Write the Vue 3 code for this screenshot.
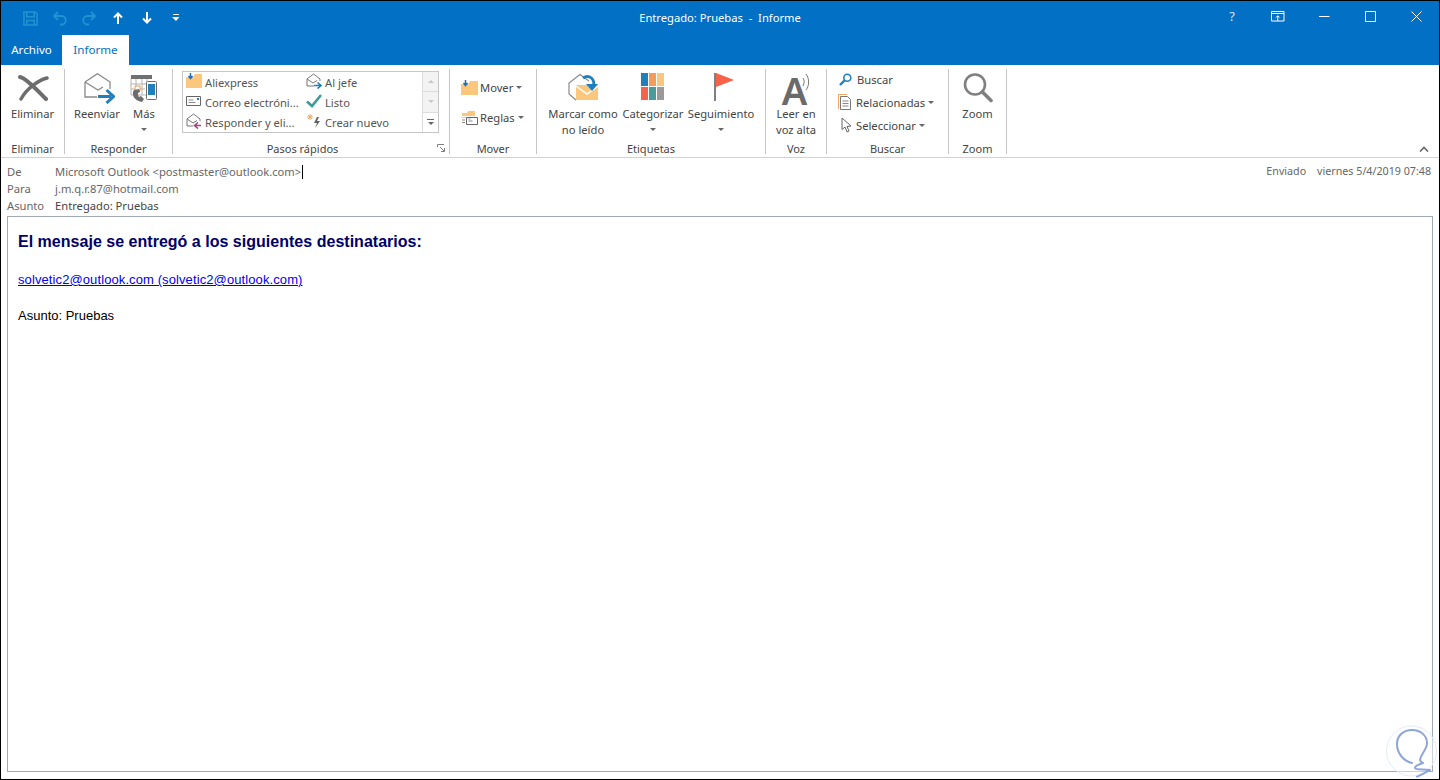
<script setup>
const quickSteps = [
  { id: "ali", label: "Aliexpress" },
  { id: "jefe", label: "Al jefe" },
  { id: "correo", label: "Correo electróni..." },
  { id: "listo", label: "Listo" },
  { id: "resp", label: "Responder y eli..." },
  { id: "nuevo", label: "Crear nuevo" },
];
</script>

<template>
  <div class="window">
    <header class="titlebar">
      <div class="qat">
        <button class="qat-btn">
          <svg width="15" height="15" viewBox="0 0 16 16" fill="none" stroke="#2292d2" stroke-width="1.600">
            <path d="M1 1h12l2 2v12H1z" />
            <path d="M4 1v5h8V1M4 15v-5h8v5" />
          </svg>
        </button>
        <button class="qat-btn">
          <svg width="16" height="16" viewBox="0 0 16 16" fill="none" stroke="#2292d2" stroke-width="1.800">
            <path d="M6 2 2 6l4 4" />
            <path d="M2 6h7.500a4.200 4.200 0 0 1 0 8.500H8" />
          </svg>
        </button>
        <button class="qat-btn">
          <svg width="16" height="16" viewBox="0 0 16 16" fill="none" stroke="#2292d2" stroke-width="1.800">
            <path d="m10 2 4 4-4 4" />
            <path d="M14 6H6.500a4.200 4.200 0 0 0 0 8.500H8" />
          </svg>
        </button>
        <button class="qat-btn">
          <svg width="10" height="12" viewBox="0 0 10 12" fill="none" stroke="#fff" stroke-width="2">
            <path d="M1 5.500 5 1.500l4 4M5 2v10" />
          </svg>
        </button>
        <button class="qat-btn">
          <svg width="10" height="12" viewBox="0 0 10 12" fill="none" stroke="#fff" stroke-width="2">
            <path d="M1 6.500 5 10.500l4-4M5 10V0" />
          </svg>
        </button>
        <button class="qat-btn">
          <svg width="8" height="8" viewBox="0 0 8 8" fill="#fff">
            <path d="M1 0h6v1H1zM0 3h7.500L4 7z" />
          </svg>
        </button>
      </div>
      <div class="title">Entregado: Pruebas&nbsp; -&nbsp; Informe</div>
      <div class="controls">
        <button class="ctrl help">?</button>
        <button class="ctrl">
          <svg width="14" height="11" viewBox="0 0 14 11" fill="none" stroke="#fff">
            <path d="M.5.500h12.500v9.500H.5zM.5 2.500H13M6.800 10V5M5 6.500l1.800-1.800 1.800 1.800" />
          </svg>
        </button>
        <button class="ctrl">
          <svg width="11" height="11" viewBox="0 0 11 11" stroke="#fff"><path d="M0 5.500h10.500" /></svg>
        </button>
        <button class="ctrl">
          <svg width="11" height="11" viewBox="0 0 11 11" fill="none" stroke="#fff"><path d="M.5.500h10v10H.5z" /></svg>
        </button>
        <button class="ctrl">
          <svg width="11" height="11" viewBox="0 0 11 11" fill="none" stroke="#fff"><path d="m.5.500 10 10M10.500.500l-10 10" /></svg>
        </button>
      </div>
    </header>

    <nav class="tabs">
      <span class="tab">Archivo</span>
      <span class="tab active">Informe</span>
    </nav>

    <section class="ribbon">
      <div class="group g-eliminar">
        <div class="group-body center">
          <div class="big" style="width: 63px">
            <div class="big-icon">
              <svg width="32" height="28" viewBox="0 0 32 28" fill="none" stroke="#6d6d6d" stroke-linecap="round">
                <path d="M3 4c6 1 17 13 26 22" stroke-width="4" />
                <path d="M30 5C22 7 10 15 4 26" stroke-width="3.400" />
              </svg>
            </div>
            <span>Eliminar</span>
          </div>
        </div>
        <div class="group-label">Eliminar</div>
      </div>

      <div class="group g-responder">
        <div class="group-body center responder-body">
          <div class="big w-reenviar">
            <div class="big-icon">
              <svg class="i-reenviar" width="31" height="31" viewBox="0 0 31 31" fill="none">
                <path d="M1 9 13.500.7 26 9v7M1 9v15h12M1 9l13 8 5-3" stroke="#8a8a8a" stroke-width="1.300" />
                <path d="M14 23.500h13M22.500 17l7 6.500-7 6.500" stroke="#1f80bd" stroke-width="3" />
              </svg>
            </div>
            <span>Reenviar</span>
          </div>
          <div class="big w-mas">
            <div class="big-icon">
              <svg width="28" height="30" viewBox="0 0 28 30" fill="none">
                <path d="M1 2h21v4H1z" fill="#707070" />
                <path d="M1 6v16h16M1 11h21M1 16h14M6 6v16M12 6v16M17 6v5" stroke="#b5b5b5" />
                <path d="M5 13h5v5H5z" fill="#fff" stroke="#ee9a50" />
                <path d="M4 17c-3 4 0 11 8 12l2-3-3-3-2 1c-1-1-1-3-1-4l2-1-1-3z" fill="#6d6d6d" />
                <rect x="16.500" y="8.500" width="10" height="18" rx="1" fill="#fff" stroke="#6d6d6d" />
                <rect x="18" y="11" width="7" height="11" fill="#1f80bd" />
              </svg>
            </div>
            <span>Más</span>
            <i class="caret caret-line" />
          </div>
        </div>
        <div class="group-label">Responder</div>
      </div>

      <div class="group g-pasos">
        <div class="group-body">
          <div class="steps">
            <div class="steps-list">
              <div v-for="step in quickSteps" :key="step.id" class="step">
                <span class="step-icon">
                  <svg v-if="step.id === 'ali'" width="16" height="16" viewBox="0 0 16 16">
                    <path d="M0 4h7l2-3h7v14H0z" fill="#fbc77d" />
                    <path d="M4.500 0v4.500M2.500 3l2 2.500 2-2.500" fill="none" stroke="#1f6fb5" stroke-width="1.500" />
                  </svg>
                  <svg v-else-if="step.id === 'jefe'" width="16" height="16" viewBox="0 0 16 16" fill="none">
                    <path d="M1 6 7.500 1 14 6v2M1 6v7h7M1 6l6 4 4-2.500" stroke="#777" />
                    <path d="M8 12.500h6M11.500 9.500l3.500 3-3.500 3" stroke="#1f80bd" stroke-width="1.600" />
                  </svg>
                  <svg v-else-if="step.id === 'correo'" width="15" height="12" viewBox="0 0 15 12" fill="none">
                    <path d="M.5 1.500h14v9H.5z" stroke="#666" />
                    <path d="M2.500 5h5M2.500 7.500h7" stroke="#8a8a8a" />
                    <path d="M11 3h2v2h-2z" fill="#1f80bd" />
                  </svg>
                  <svg v-else-if="step.id === 'listo'" width="16" height="14" viewBox="0 0 16 14" fill="none">
                    <path d="M1 7.500 6 12 15 1" stroke="#3f9a9a" stroke-width="2.600" />
                  </svg>
                  <svg v-else-if="step.id === 'resp'" width="16" height="16" viewBox="0 0 16 16" fill="none">
                    <path d="M1 6 7.500 1 14 6v2M1 6v7h6M1 6l6 4 4-2.500" stroke="#777" />
                    <path d="M15 12.500H9M12 9.500l-3.500 3 3.500 3" stroke="#a6447f" stroke-width="1.600" />
                  </svg>
                  <svg v-else width="16" height="16" viewBox="0 0 16 16" fill="none">
                    <path d="M4 1v6M1 4h6M2 2l4 4M6 2 2 6" stroke="#f0a860" />
                    <path d="M11 4 8 10h3l-2 5 5-7h-3l2-4z" fill="#606060" />
                  </svg>
                </span>
                <span>{{ step.label }}</span>
              </div>
            </div>
            <div class="steps-scroll">
              <span class="sb"><i class="tri up" /></span>
              <span class="sb"><i class="tri" /></span>
              <span class="sb more"><i class="bar" /><i class="tri dark" /></span>
            </div>
          </div>
        </div>
        <div class="group-label label-pasos">Pasos rápidos</div>
        <svg class="launcher" width="8" height="8" viewBox="0 0 8 8" fill="none" stroke="#808080">
          <path d="M.5 3V.5H7M3 3l4 4M7.500 4v3.500H4" />
        </svg>
      </div>

      <div class="group g-mover">
        <div class="group-body column">
          <div class="small">
            <svg class="i-mover" width="17" height="15" viewBox="0 0 17 15">
              <path d="M0 4h7l2-3h8v14H0z" fill="#fbc77d" />
              <path d="M4.500 0v4.500M2.500 3l2 2.500 2-2.500" fill="none" stroke="#1f6fb5" stroke-width="1.500" />
            </svg>
            <span>Mover</span><i class="caret" />
          </div>
          <div class="small">
            <svg class="i-mover" width="17" height="15" viewBox="0 0 17 15" fill="none">
              <path d="M1 3h5l1-2h7v5H1z" fill="#fbc77d" />
              <path d="M0 7h6v1H0z" fill="#fbc77d" />
              <path d="M5.500 7.500h11v7h-11z" fill="#fff" stroke="#666" />
              <path d="M7.500 11h4M7.500 9h2M1 10h3M1 12.500h3" stroke="#888" />
            </svg>
            <span>Reglas</span><i class="caret" />
          </div>
        </div>
        <div class="group-label">Mover</div>
      </div>

      <div class="group g-etiquetas">
        <div class="group-body center">
          <div class="big w-marcar">
            <div class="big-icon">
              <svg width="30" height="30" viewBox="0 0 30 30" fill="none">
                <path d="M8 27 1 21V10L12 1.500 21 8" stroke="#8a8a8a" stroke-width="1.200" />
                <path d="M8 12h22v15H8z" fill="#fbc77d" />
                <path d="m8 13 11 8 11-8" stroke="#fff" stroke-width="1.500" />
                <path d="M15 5c6-4 13 1 10 9" stroke="#1f80bd" stroke-width="2.800" />
                <path d="M18 11h12l-6 7z" fill="#1f80bd" />
              </svg>
            </div>
            <span>Marcar como</span>
            <span>no leído</span>
          </div>
          <div class="big w-categorizar">
            <div class="big-icon">
              <svg width="24" height="28" viewBox="0 0 24 28">
                <rect x="0" y="0" width="7" height="13" fill="#1f80bd" />
                <rect x="8" y="0" width="7" height="13" fill="#f59c5b" />
                <rect x="16" y="0" width="7" height="13" fill="#fbc77d" />
                <rect x="0" y="14" width="7" height="13" fill="#f7634a" />
                <rect x="8" y="14" width="7" height="13" fill="#4a9c9c" />
                <rect x="16" y="14" width="7" height="13" fill="#9a9a9a" />
              </svg>
            </div>
            <span>Categorizar</span>
            <i class="caret caret-line" />
          </div>
          <div class="big w-seguimiento">
            <div class="big-icon">
              <svg class="i-flag" width="22" height="28" viewBox="0 0 22 28">
                <rect x="0" y="0" width="2" height="28" fill="#808080" />
                <path d="M2 0 20 7 2 14z" fill="#f7634a" />
              </svg>
            </div>
            <span>Seguimiento</span>
            <i class="caret caret-line" />
          </div>
        </div>
        <div class="group-label">Etiquetas</div>
      </div>

      <div class="group g-voz">
        <div class="group-body center">
          <div class="big w-leer">
            <div class="big-icon">
              <span class="read-a">A</span>
              <svg class="waves" width="8" height="18" viewBox="0 0 8 18" fill="none" stroke="#777">
                <path d="M1 5c1.500 2 1.500 5 0 8M4 1c3.500 4.500 3.500 11.500 0 16" />
              </svg>
            </div>
            <span>Leer en</span>
            <span>voz alta</span>
          </div>
        </div>
        <div class="group-label">Voz</div>
      </div>

      <div class="group g-buscar">
        <div class="group-body column tight">
          <div class="small">
            <svg class="i-buscar" width="13" height="13" viewBox="0 0 13 13" fill="none" stroke="#1f80bd">
              <circle cx="8.300" cy="4.700" r="3.500" stroke-width="1.600" />
              <path d="M5.500 7.500 1 12" stroke-width="2.400" />
            </svg>
            <span>Buscar</span>
          </div>
          <div class="small">
            <svg class="i-rel" width="13" height="16" viewBox="0 0 13 16" fill="none">
              <path d="M.5 15V.5H9" stroke="#f0a860" />
              <path d="M2.500 2.500h7l3 3v10h-10z" fill="#fff" stroke="#777" />
              <path d="M4.500 7h6M4.500 9.500h6M4.500 12h6" stroke="#888" />
            </svg>
            <span>Relacionadas</span><i class="caret" />
          </div>
          <div class="small">
            <svg class="i-sel" width="11" height="16" viewBox="0 0 11 16" fill="#fff" stroke="#666">
              <path d="M1 1v11.500l3-2.500 2 5 2-1-2-4.500 4-.5z" />
            </svg>
            <span>Seleccionar</span><i class="caret" />
          </div>
        </div>
        <div class="group-label">Buscar</div>
      </div>

      <div class="group g-zoom">
        <div class="group-body center">
          <div class="big" style="width: 57px">
            <div class="big-icon">
              <svg width="30" height="30" viewBox="0 0 30 30" fill="none" stroke="#808080">
                <circle cx="12" cy="11.500" r="10" stroke-width="2.600" />
                <path d="m19.500 19 8.500 8.500" stroke-width="3.600" stroke-linecap="round" />
              </svg>
            </div>
            <span>Zoom</span>
          </div>
        </div>
        <div class="group-label">Zoom</div>
      </div>

      <svg class="collapse" width="10" height="6" viewBox="0 0 10 6" fill="none" stroke="#666" stroke-width="1.600">
        <path d="m1 5.500 4-4 4 4" />
      </svg>
    </section>

    <section class="meta">
      <div class="meta-row">
        <span class="meta-key">De</span>
        <span class="meta-val">Microsoft Outlook &lt;postmaster@outlook.com&gt;</span>
        <i class="cursor" />
        <span class="sent"><span class="sent-key">Enviado</span><span>viernes 5/4/2019 07:48</span></span>
      </div>
      <div class="meta-row">
        <span class="meta-key">Para</span>
        <span class="meta-val">j.m.q.r.87@hotmail.com</span>
      </div>
      <div class="meta-row">
        <span class="meta-key">Asunto</span>
        <span class="meta-val subject">Entregado: Pruebas</span>
      </div>
    </section>

    <main class="message">
      <h1>El mensaje se entregó a los siguientes destinatarios:</h1>
      <p><a href="#">solvetic2@outlook.com (solvetic2@outlook.com)</a></p>
      <p>Asunto: Pruebas</p>
    </main>

    <svg class="watermark" width="56" height="56" viewBox="0 0 56 56" fill="none">
      <circle cx="29.500" cy="28" r="25" fill="#fff" fill-opacity="0.45" stroke="#e4ecf6" />
      <path
        d="M30 40C22 38 15 31 15 21 15 12 22 7 30 7c9 0 15 6 15 13 0 7-6 10-7 17 0 1 1 2 3 3-3 1-8 2-8 5 0 2 8 1 15 2-4 2-9 5-13 6.700"
        stroke="#8da5d8"
        stroke-width="2"
        stroke-linecap="round"
        stroke-linejoin="round"
      />
    </svg>
  </div>
</template>

<style scoped>
.window {
  position: relative;
  box-sizing: border-box;
  width: 1440px;
  height: 780px;
  border: 1px solid #000;
  display: flex;
  flex-direction: column;
  overflow: hidden;
  background: #fff;
  font-family: "Noto Sans", "Liberation Sans", sans-serif;
  font-size: 11.2px;
  color: #444;
}
button {
  border: 0;
  padding: 0;
  background: none;
  font: inherit;
  color: inherit;
  display: flex;
  align-items: center;
  justify-content: center;
}

.titlebar {
  height: 34px;
  flex: none;
  background: #0170c5;
  color: #fff;
  display: grid;
  grid-template-columns: 1fr auto 1fr;
  align-items: center;
}
.qat {
  display: flex;
  padding-left: 15px;
}
.qat-btn {
  width: 29px;
  height: 34px;
}
.title {
  font-size: 11.2px;
  padding-bottom: 2px;
}
.controls {
  display: flex;
  justify-content: flex-end;
  align-self: start;
}
.ctrl {
  width: 46px;
  height: 30px;
}
.help {
  font-size: 13px;
  color: #cfe6f7;
}

.tabs {
  height: 30px;
  flex: none;
  background: #0170c5;
  display: flex;
}
.tab {
  box-sizing: border-box;
  width: 61px;
  padding-bottom: 2px;
  display: flex;
  align-items: center;
  justify-content: center;
  color: #fff;
  font-size: 11.6px;
}
.tab.active {
  width: 67px;
  background: #fff;
  color: #0170c5;
}

.ribbon {
  position: relative;
  box-sizing: border-box;
  height: 93px;
  flex: none;
  padding: 4px 0 3px;
  display: flex;
  border-bottom: 1px solid #d2d2d2;
}
.group {
  position: relative;
  box-sizing: border-box;
  display: flex;
  flex-direction: column;
  border-right: 1px solid #c6c6c6;
  height: 85px;
}
.g-eliminar { width: 64px; }
.g-responder { width: 108px; }
.g-pasos { width: 277px; }
.g-mover { width: 87px; }
.g-etiquetas { width: 229px; }
.g-voz { width: 61px; }
.g-buscar { width: 122px; }
.g-zoom { width: 58px; }

.group-body {
  height: 72px;
  flex: none;
  display: flex;
}
.group-body.center {
  justify-content: center;
}
.responder-body {
  padding-right: 2px;
  gap: 1px;
}
.group-body.column {
  flex-direction: column;
  padding: 8px 0 0 10px;
  gap: 10px;
  box-sizing: border-box;
}
.group-body.tight {
  padding: 0 0 0 12px;
  gap: 3px;
}
.group-label {
  height: 13px;
  line-height: 16px;
  text-align: center;
  font-size: 11px;
  color: #444;
}
.label-pasos {
  padding-right: 17px;
}
.launcher {
  position: absolute;
  right: 4px;
  bottom: 2px;
}

.big {
  display: flex;
  flex-direction: column;
  align-items: center;
  line-height: 16px;
  white-space: nowrap;
}
.big-icon {
  height: 37px;
  flex: none;
  display: flex;
  align-items: flex-start;
  justify-content: center;
  padding-top: 4px;
  box-sizing: border-box;
}
.w-reenviar { width: 52px; }
.w-mas { width: 40px; }
.w-marcar { width: 76px; }
.w-categorizar { width: 64px; }
.w-seguimiento { width: 72px; }
.w-leer { width: 50px; }
.i-reenviar { margin-left: 4px; }
.i-flag { margin-left: 7px; }

.caret {
  display: inline-block;
  width: 0;
  height: 0;
  margin-left: 3px;
  border-left: 3px solid transparent;
  border-right: 3px solid transparent;
  border-top: 3px solid #666;
}
.caret-line {
  margin: 6px 0 0;
}

.steps {
  margin: 2px 0 0 9px;
  box-sizing: border-box;
  width: 257px;
  height: 62px;
  border: 1px solid #c6c6c6;
  display: flex;
}
.steps-list {
  flex: 1;
  display: grid;
  grid-template-columns: 120px 1fr;
  grid-auto-rows: 20px;
}
.step {
  display: flex;
  align-items: center;
  color: #555;
  white-space: nowrap;
  padding-left: 3px;
  height: 20px;
}
.step-icon {
  width: 19px;
  display: flex;
  align-items: center;
  flex: none;
}
.step-icon svg {
  margin-top: -3px;
}
.steps-scroll {
  width: 15px;
  flex: none;
  border-left: 1px solid #dcdcdc;
  display: flex;
  flex-direction: column;
}
.sb {
  flex: 1;
  display: flex;
  flex-direction: column;
  align-items: center;
  justify-content: center;
  gap: 2px;
  background: #f3f3f3;
  border-bottom: 1px solid #dcdcdc;
}
.sb.more {
  background: #fff;
  border-bottom: 0;
}
.tri {
  width: 0;
  height: 0;
  border-left: 3px solid transparent;
  border-right: 3px solid transparent;
  border-top: 3px solid #c8c8c8;
}
.tri.up {
  border-top: 0;
  border-bottom: 3px solid #c8c8c8;
}
.tri.dark {
  border-top-color: #666;
}
.bar {
  width: 7px;
  height: 1px;
  background: #666;
}

.small {
  display: flex;
  align-items: center;
  height: 20px;
  white-space: nowrap;
}
.small svg {
  margin-right: 3px;
  flex: none;
}
.i-mover { margin-left: 1px; margin-right: 2px !important; }
.i-buscar { margin-left: 0; margin-right: 5px !important; }
.i-rel { margin-left: -1px; margin-right: 5px !important; }
.i-sel { margin-left: 2px; margin-right: 4px !important; }

.read-a {
  font-size: 38px;
  font-weight: 600;
  line-height: 34px;
  color: #6a6a6a;
}
.waves {
  margin-left: -5px;
}

.collapse {
  position: absolute;
  right: 10px;
  bottom: 5px;
}

.meta {
  flex: none;
  padding: 5px 8px 2px 6px;
}
.meta-row {
  display: flex;
  height: 17px;
  line-height: 17px;
  align-items: center;
}
.meta-key {
  width: 48px;
  color: #666;
  flex: none;
}
.meta-val {
  color: #666;
}
.subject {
  color: #444;
}
.cursor {
  width: 1px;
  height: 14px;
  background: #000;
  margin-left: 1px;
}
.sent {
  margin-left: auto;
  display: flex;
  gap: 11px;
  color: #666;
  font-size: 10.7px;
}

.message {
  flex: 1;
  min-height: 0;
  margin: 0 6px 7px;
  padding: 16px 10px;
  border: 1px solid #a0a9b4;
  font-family: "Liberation Sans", Arial, sans-serif;
  font-size: 13px;
  line-height: 15px;
  color: #000;
}
.message h1 {
  margin: 0 0 21px;
  font-size: 16px;
  line-height: 18px;
  font-weight: bold;
  color: #000066;
  letter-spacing: 0.02px;
}
.message p {
  margin: 0 0 21px;
}
.message a {
  color: #0000ee;
  letter-spacing: 0.1px;
}

.watermark {
  position: absolute;
  right: 1px;
  bottom: 0;
  pointer-events: none;
}
</style>
